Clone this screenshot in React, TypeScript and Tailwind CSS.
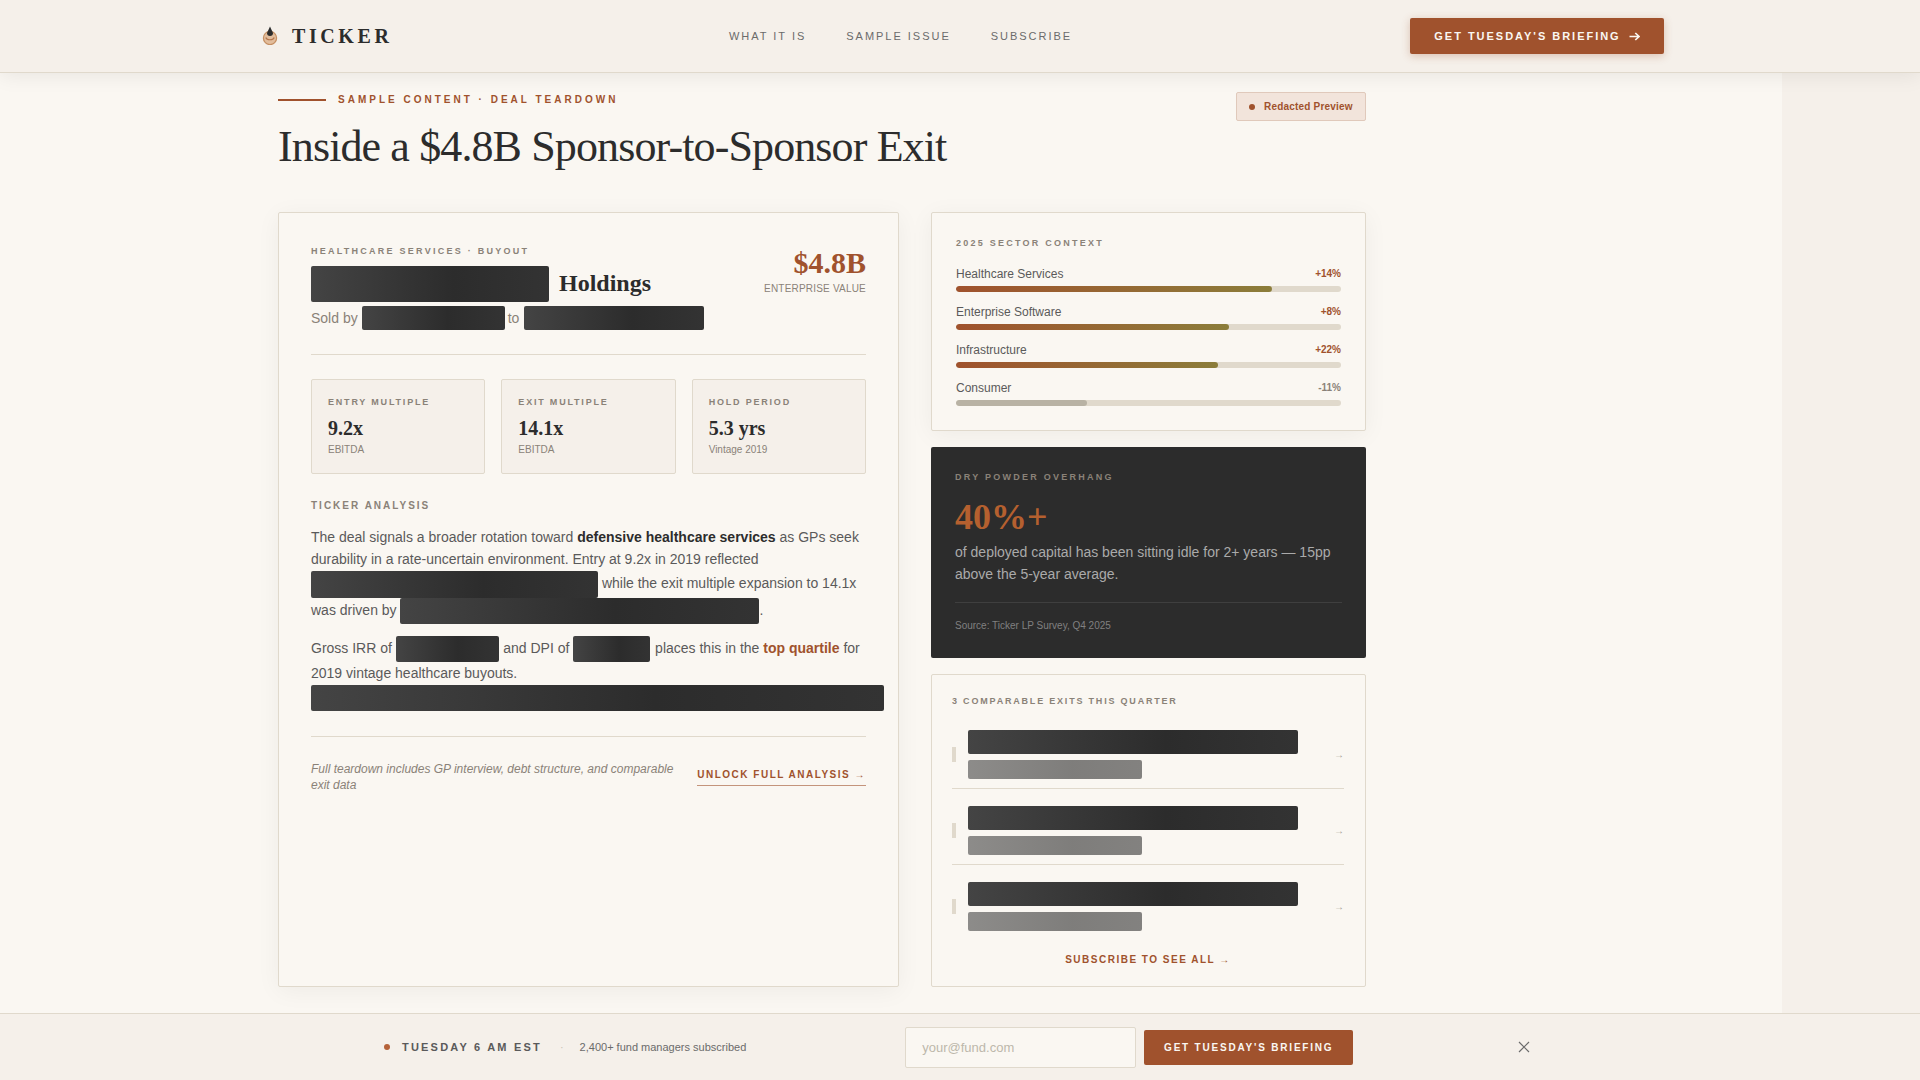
import React from "react";

const SANS = "font-['Liberation_Sans',Arial,sans-serif]";
const SERIF = "font-['Liberation_Serif','Times_New_Roman',serif]";

function Redact({ className = "" }: { className?: string }) {
  return (
    <span
      className={
        "inline-block align-middle rounded-[2px] bg-[linear-gradient(90deg,#444444,#2c2c2c_60%,#333333)] " +
        className
      }
    />
  );
}

function Logo() {
  return (
    <svg width="16" height="19" viewBox="0 0 16 19" className="shrink-0 -translate-y-px">
      <circle cx="8" cy="12" r="6.6" fill="#e2bd9c" stroke="#c58f62" strokeWidth="1.2" />
      <path d="M3.8 11.5c1.2 3 7.2 3 8.4 0" fill="none" stroke="#b5764d" strokeWidth="1.2" />
      <path d="M8 0.5 L11 7 Q11 10 8 10 Q5 10 5 7 Z" fill="#2c2c2c" />
    </svg>
  );
}

function Stat({ label, value, sub }: { label: string; value: string; sub: string }) {
  return (
    <div className="h-[95px] rounded-[2px] border border-[#e0d9cc] bg-[#f5f0ea] px-4 pt-[16px]">
      <div className="text-[9px] leading-[12px] font-bold tracking-[0.2em] text-[#8a8278]">{label}</div>
      <div className={SERIF + " mt-[8px] text-[20px] leading-[24px] font-bold text-[#2c2c2c]"}>{value}</div>
      <div className="mt-[3px] text-[10px] leading-[14px] text-[#8a8278]">{sub}</div>
    </div>
  );
}

function Sector({ name, val, pct, neg }: { name: string; val: string; pct: number; neg?: boolean }) {
  return (
    <div className="h-[38px]">
      <div className="flex h-[24px] items-center justify-between">
        <span className="text-[12px] leading-[16px] text-[#5a5a5a]">{name}</span>
        <span className={"text-[10px] leading-[14px] font-bold " + (neg ? "text-[#8a8278]" : "text-[#a0522d]")}>{val}</span>
      </div>
      <div className="h-[6px] overflow-hidden rounded-[3px] bg-[#e0d9cc]">
        <div
          className={
            "h-full rounded-[3px] " +
            (neg ? "bg-[#b8b2a4]" : "bg-[linear-gradient(90deg,#a0522d,#8b7d3a)]")
          }
          style={{ width: pct + "%" }}
        />
      </div>
    </div>
  );
}

function Exit({ last }: { last?: boolean }) {
  return (
    <div className={"flex h-[76px] items-start pt-[17px] " + (last ? "" : "border-b border-[#e0d9cc]")}>
      <div className="mt-[17px] h-[15px] w-[4px] shrink-0 bg-[#e0d9cc]" />
      <div className="ml-[12px] flex flex-col">
        <Redact className="h-[24px] w-[330px]" />
        <Redact className="mt-[6px] h-[19px] w-[174px] opacity-60" />
      </div>
      <span className="ml-auto mt-[18px] text-[10px] leading-[14px] text-[#a8a294]">→</span>
    </div>
  );
}

export default function App() {
  return (
    <div className={SANS + " flex h-[1080px] w-[1920px] flex-col overflow-hidden bg-[#f5f0ea] text-[#2c2c2c]"}>
      <header className="relative z-10 flex h-[73px] shrink-0 items-center border-b border-[#e0d9cc] bg-[#f5f0ea] pl-[262px] pr-[256px] shadow-[0_2px_20px_rgba(0,0,0,0.08)]">
        <div className="flex w-[467px] items-center">
          <Logo />
          <span className={SERIF + " ml-[14px] text-[20px] font-bold tracking-[0.18em] text-[#2c2c2c]"}>TICKER</span>
        </div>
        <nav className="flex gap-[40px] text-[11px] tracking-[0.18em] text-[#6b6b6b]">
          <span>WHAT IT IS</span>
          <span>SAMPLE ISSUE</span>
          <span>SUBSCRIBE</span>
        </nav>
        <button className="ml-auto flex h-[36px] w-[254px] items-center justify-center gap-[8px] rounded-[2px] bg-[#a0522d] text-[11px] font-bold tracking-[0.18em] text-[#faf7f2] shadow-[0_2px_8px_rgba(160,82,45,0.3)]">
          GET TUESDAY'S BRIEFING
          <svg width="11" height="9" viewBox="0 0 11 9" fill="none" stroke="#faf7f2" strokeWidth="1.7">
            <path d="M0.5 4.5H10M6.3 1L10 4.5L6.3 8" />
          </svg>
        </button>
      </header>

      <div className="flex min-h-0 flex-1">
        <main className="w-[1782px] shrink-0 bg-[#faf7f2] pl-[278px]">
          <div className="w-[1088px]">
            <div className="flex items-start justify-between pt-[19px]">
              <div>
                <div className="flex h-[16px] items-center">
                  <span className="h-[2px] w-[48px] bg-[#a0522d]" />
                  <span className="ml-[12px] text-[10px] leading-[14px] font-bold tracking-[0.3em] text-[#a0522d]">
                    SAMPLE CONTENT · DEAL TEARDOWN
                  </span>
                </div>
                <h1 className={SERIF + " mt-[11px] text-[44px] leading-[56px] font-normal tracking-[-0.02em] text-[#2c2c2c]"}>
                  Inside a $4.8B Sponsor-to-Sponsor Exit
                </h1>
              </div>
              <div className="flex h-[29px] w-[130px] items-center rounded-[2px] border border-[#e0c9bb] bg-[#f2e4db] pl-[12px] text-[10px] font-bold tracking-[0.02em] text-[#a0522d]">
                <span className="mr-[9px] h-[6px] w-[6px] rounded-full bg-[#a0522d]" />
                Redacted Preview
              </div>
            </div>

            <div className="mt-[37px] flex gap-[32px]">
              <section className="h-[775px] w-[621px] shrink-0 rounded-[2px] border border-[#e0d9cc] bg-[#faf7f2] px-[32px] pt-[32px] shadow-[0_4px_24px_rgba(0,0,0,0.05)]">
                <div className="flex items-start justify-between">
                  <div>
                    <div className="text-[9px] leading-[12px] font-bold tracking-[0.25em] text-[#8a8278]">
                      HEALTHCARE SERVICES · BUYOUT
                    </div>
                    <div className="mt-[9px] flex items-center">
                      <Redact className="h-[36px] w-[238px]" />
                      <span className={SERIF + " ml-[10px] -translate-y-px text-[24px] leading-[36px] font-bold text-[#2c2c2c]"}>Holdings</span>
                    </div>
                    <div className="mt-[4px] flex items-center text-[14px] leading-[24px] text-[#8a8278]">
                      Sold by
                      <Redact className="ml-[4px] h-[24px] w-[143px]" />
                      <span className="mx-[3px]">to</span>
                      <Redact className="ml-[2px] h-[24px] w-[180px]" />
                    </div>
                  </div>
                  <div className="text-right">
                    <div className={SERIF + " text-[30px] leading-[36px] font-bold text-[#a0522d]"}>$4.8B</div>
                    <div className="mt-[1px] text-[10px] leading-[14px] tracking-[0.02em] text-[#8a8278]">ENTERPRISE VALUE</div>
                  </div>
                </div>

                <div className="mt-[24px] border-t border-[#e0d9cc]" />

                <div className="mt-[24px] grid grid-cols-3 gap-4">
                  <Stat label="ENTRY MULTIPLE" value="9.2x" sub="EBITDA" />
                  <Stat label="EXIT MULTIPLE" value="14.1x" sub="EBITDA" />
                  <Stat label="HOLD PERIOD" value="5.3 yrs" sub="Vintage 2019" />
                </div>

                <div className="mt-[25px] text-[10px] leading-[14px] font-bold tracking-[0.2em] text-[#8a8278]">TICKER ANALYSIS</div>

                <p className="mt-[13px] text-[14px] leading-[22.4px] text-[#5a5a5a]">
                  The deal signals a broader rotation toward <strong className="font-bold text-[#2c2c2c]">defensive healthcare services</strong> as GPs seek durability in a rate-uncertain environment. Entry at 9.2x in 2019 reflected{" "}
                  <Redact className="h-[26.8px] w-[287px]" /> while the exit multiple expansion to 14.1x was driven by{" "}
                  <Redact className="h-[26.8px] w-[359px]" />.
                </p>
                <p className="mt-[12px] w-[572px] text-[14px] leading-[22.4px] text-[#5a5a5a]">
                  Gross IRR of <Redact className="mr-[0.5px] h-[25.8px] w-[103px]" /> and DPI of <Redact className="mr-[1px] h-[25.8px] w-[77px]" /> places this in the <strong className="font-bold text-[#a0522d]">top quartile</strong> for
                  <br />
                  2019 vintage healthcare buyouts.
                  <br />
                  <Redact className="h-[26.8px] w-[572.6px]" />
                </p>

                <div className="mt-[25px] flex items-center justify-between border-t border-[#e0d9cc] pt-[24px]">
                  <p className="w-[372px] text-[12px] leading-[16px] text-[#8a8278] italic">
                    Full teardown includes GP interview, debt structure, and comparable exit data
                  </p>
                  <span className="border-b border-[#a0522d]/60 pb-[3px] text-[10px] leading-[14px] font-bold tracking-[0.15em] text-[#a0522d]">
                    UNLOCK FULL ANALYSIS →
                  </span>
                </div>
              </section>

              <aside className="flex w-[435px] shrink-0 flex-col gap-[16px]">
                <section className="h-[219px] rounded-[2px] border border-[#e0d9cc] bg-[#faf7f2] px-[24px] pt-[24px] shadow-[0_4px_24px_rgba(0,0,0,0.05)]">
                  <div className="text-[9px] leading-[12px] font-bold tracking-[0.25em] text-[#8a8278]">2025 SECTOR CONTEXT</div>
                  <div className="mt-[13px]">
                    <Sector name="Healthcare Services" val="+14%" pct={82} />
                    <Sector name="Enterprise Software" val="+8%" pct={71} />
                    <Sector name="Infrastructure" val="+22%" pct={68} />
                    <Sector name="Consumer" val="-11%" pct={34} neg />
                  </div>
                </section>

                <section className="h-[211px] rounded-[2px] bg-[#2c2c2c] px-[24px] pt-[24px]">
                  <div className="text-[9px] leading-[12px] font-bold tracking-[0.25em] text-[#8a8278]">DRY POWDER OVERHANG</div>
                  <div className={SERIF + " mt-[12px] text-[36px] leading-[44px] font-bold text-[#b5602f]"}>40%+</div>
                  <p className="mt-[2px] text-[14px] leading-[22.4px] text-[#aaaaaa]">
                    of deployed capital has been sitting idle for 2+ years — 15pp above the 5-year average.
                  </p>
                  <div className="mt-[16px] border-t border-[#3f3f3f] pt-[16px] text-[10px] leading-[14px] text-[#808080]">
                    Source: Ticker LP Survey, Q4 2025
                  </div>
                </section>

                <section className="h-[313px] rounded-[2px] border border-[#e0d9cc] bg-[#faf7f2] pl-[20px] pr-[21px] pt-[20px]">
                  <div className="text-[9px] leading-[12px] font-bold tracking-[0.2em] text-[#8a8278]">3 COMPARABLE EXITS THIS QUARTER</div>
                  <div className="mt-[6px]">
                    <Exit />
                    <Exit />
                    <Exit last />
                  </div>
                  <div className="mt-[12px] text-center text-[10px] leading-[14px] font-bold tracking-[0.15em] text-[#a0522d]">
                    SUBSCRIBE TO SEE ALL →
                  </div>
                </section>
              </aside>
            </div>
          </div>
        </main>
        <div className="flex-1" />
      </div>

      <footer className="flex h-[67px] shrink-0 items-center border-t border-[#e0d9cc] bg-[#f5f0ea] pl-[384px]">
        <span className="h-[6px] w-[6px] rounded-full bg-[#b5623a]" />
        <span className="ml-[12px] text-[11px] font-bold tracking-[0.2em] text-[#5a5a5a]">TUESDAY 6 AM EST</span>
        <span className="ml-[18px] text-[11px] text-[#c9c2b5]">·</span>
        <span className="ml-[16px] text-[11px] text-[#6b6b6b]">2,400+ fund managers subscribed</span>
        <input
          readOnly
          placeholder="your@fund.com"
          className="ml-[159px] h-[41px] w-[231px] rounded-[2px] border border-[#e0d9cc] bg-[#faf7f2] px-[16px] text-[13px] outline-none placeholder:text-[#bdb7ab]"
        />
        <button className="ml-[8px] h-[35px] w-[209px] rounded-[2px] bg-[#a0522d] text-[10px] font-bold tracking-[0.18em] text-[#faf7f2]">
          GET TUESDAY'S BRIEFING
        </button>
        <svg width="12" height="12" viewBox="0 0 12 12" className="ml-[165px]" fill="none" stroke="#6b6b6b" strokeWidth="1.2">
          <path d="M1 1l10 10M11 1L1 11" />
        </svg>
      </footer>
    </div>
  );
}
